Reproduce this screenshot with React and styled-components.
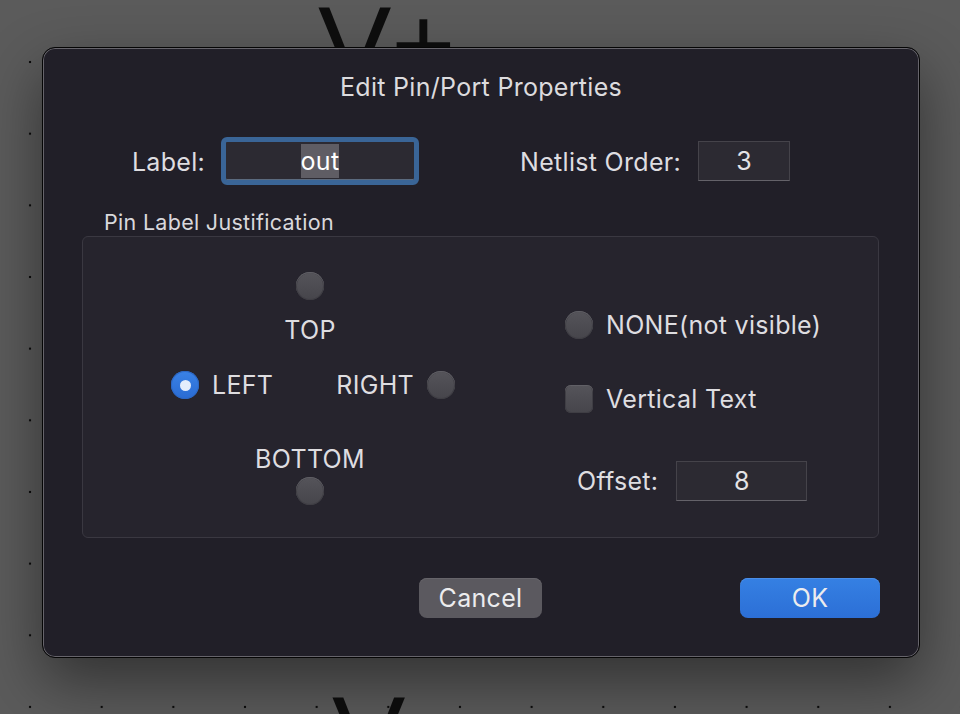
import React from "react";
import styled, { createGlobalStyle } from "styled-components";

const Global = createGlobalStyle`
  html, body { margin: 0; padding: 0; }
  body { font-family: Inter, "Noto Sans", sans-serif; letter-spacing: 0.3px; }
`;

const Page = styled.div`
  position: relative;
  width: 960px;
  height: 714px;
  overflow: hidden;
  background-color: #5b5b5b;
  background-image: radial-gradient(circle, #0a0a0a 1.1px, transparent 1.6px);
  background-size: 71.67px 71.67px;
  background-position: -5.8px 26.2px;
  padding: 47px 0 0 42px;
  box-sizing: border-box;
`;

const CanvasText = styled.div`
  position: absolute;
  left: ${(p) => p.$x}px;
  top: ${(p) => p.$y}px;
  font-family: "Liberation Sans", Arial, sans-serif;
  font-size: 110px;
  letter-spacing: 0;
  line-height: 1;
  color: #0e0e0e;
  white-space: pre;
`;

const Dialog = styled.div`
  position: relative;
  width: 878px;
  height: 611px;
  box-sizing: border-box;
  background: #211f28;
  border: 1px solid #050505;
  border-radius: 13px;
  box-shadow: inset 0 0 0 1px #66646b, 0 24px 60px rgba(0, 0, 0, 0.45);
  color: #dedde0;
  display: flex;
  flex-direction: column;
`;

const Title = styled.div`
  margin-top: 24px;
  height: 30px;
  line-height: 30px;
  text-align: center;
  font-size: 25px;
  color: #dcdbde;
`;

const TopRow = styled.div`
  margin-top: 35px;
  height: 48px;
  display: grid;
  grid-template-columns: 178px 198px 279px 92px;
  align-items: center;
`;

const FieldLabel = styled.div`
  font-size: 25px;
  line-height: 30px;
  padding-top: 2px;
  text-align: right;
  padding-right: ${(p) => p.$pr || 0}px;
  white-space: nowrap;
`;

const FocusRing = styled.div`
  height: 48px;
  box-sizing: border-box;
  border: 5px solid #3a6597;
  border-radius: 6px;
  background: #2c2a32;
  display: flex;
  align-items: center;
  justify-content: center;
  box-shadow: inset 0 -1px 0 #5b6a7e;
`;

const Selected = styled.span`
  background: #5f5d64;
  color: #ffffff;
  font-size: 25px;
  line-height: 34px;
`;

const TextField = styled.div`
  width: ${(p) => p.$w}px;
  height: 40px;
  box-sizing: border-box;
  background: #2c2a32;
  border: 1px solid #45434a;
  border-bottom-color: #646269;
  display: flex;
  align-items: center;
  justify-content: center;
  font-size: 25px;
  color: #e4e3e6;
  margin-left: ${(p) => p.$ml || 0}px;
`;

const GroupLabel = styled.div`
  margin: 25px 0 0 61px;
  height: 24px;
  line-height: 24px;
  font-size: 21.5px;
  color: #d9d8dc;
`;

const GroupBox = styled.div`
  margin: 2px 0 0 39px;
  width: 797px;
  height: 302px;
  box-sizing: border-box;
  background: #26242d;
  border: 1px solid #3a3841;
  border-radius: 6px;
  display: flex;
`;

const Compass = styled.div`
  margin-left: 88px;
  width: 284px;
  display: flex;
  flex-direction: column;
  align-items: center;
  padding-top: 35px;
`;

const Radio = styled.div`
  width: 28px;
  height: 28px;
  flex: none;
  border-radius: 50%;
  box-sizing: border-box;
  background: ${(p) =>
    p.$on
      ? "linear-gradient(#3a82e6, #2a6bd2)"
      : "linear-gradient(#55545a, #46454b)"};
  box-shadow: ${(p) =>
    p.$on
      ? "inset 0 0 0 1px #2b67c4"
      : "inset 0 1px 0 #616066, inset 0 0 0 1px #3f3e44"};
  display: flex;
  align-items: center;
  justify-content: center;
  margin: ${(p) => p.$m || "0"};
  &::after {
    content: "";
    display: ${(p) => (p.$on ? "block" : "none")};
    width: 11px;
    height: 11px;
    border-radius: 50%;
    background: #e3edfc;
  }
`;

const Check = styled.div`
  width: 28px;
  height: 28px;
  flex: none;
  border-radius: 6px;
  background: linear-gradient(#55545a, #46454b);
  box-shadow: inset 0 1px 0 #616066, inset 0 0 0 1px #3f3e44;
`;

const OptionText = styled.div`
  font-size: 25px;
  line-height: 28px;
  color: #dedde0;
  white-space: nowrap;
  margin: ${(p) => p.$m || "0"};
`;

const MidRow = styled.div`
  align-self: stretch;
  margin-top: 27px;
  height: 28px;
  display: flex;
  align-items: center;
  gap: 13px;
`;

const Spacer = styled.div`
  flex: 1;
`;

const RightCol = styled.div`
  margin-left: 110px;
  padding-top: 74px;
  display: flex;
  flex-direction: column;
`;

const OptRow = styled.div`
  display: flex;
  align-items: center;
  gap: 13px;
  height: 28px;
  margin-top: ${(p) => p.$mt || 0}px;
`;

const OffsetRow = styled.div`
  margin: 48px 0 0 12px;
  display: flex;
  align-items: center;
`;

const ButtonRow = styled.div`
  margin: 40px 0 0 376px;
  display: flex;
  gap: 198px;
`;

const Button = styled.div`
  width: ${(p) => p.$w}px;
  height: 40px;
  box-sizing: border-box;
  border-radius: 8px;
  display: flex;
  align-items: center;
  justify-content: center;
  font-size: 25px;
  color: #ececee;
  background: ${(p) =>
    p.$primary ? "linear-gradient(#3580e3, #2c6fd6)" : "#5b595f"};
  box-shadow: ${(p) =>
    p.$primary ? "inset 0 1px 0 #4b8ee8" : "inset 0 1px 0 #66646a"};
`;

export default function App() {
  return (
    <>
      <Global />
      <Page>
        <CanvasText $x={318} $y={-10}>V+</CanvasText>
        <CanvasText $x={332} $y={680}>V</CanvasText>
        <Dialog>
          <Title>Edit Pin/Port Properties</Title>
          <TopRow>
            <FieldLabel $pr={16}>Label:</FieldLabel>
            <FocusRing>
              <Selected>out</Selected>
            </FocusRing>
            <FieldLabel $pr={17}>Netlist Order:</FieldLabel>
            <TextField $w={92}>3</TextField>
          </TopRow>
          <GroupLabel>Pin Label Justification</GroupLabel>
          <GroupBox>
            <Compass>
              <Radio $m="0 6px 0 0" />
              <OptionText $m="16px 6px 0 0">TOP</OptionText>
              <MidRow>
                <Radio $on />
                <OptionText>LEFT</OptionText>
                <Spacer />
                <OptionText>RIGHT</OptionText>
                <Radio />
              </MidRow>
              <OptionText $m="46px 6px 0 0">BOTTOM</OptionText>
              <Radio $m="4px 6px 0 0" />
            </Compass>
            <RightCol>
              <OptRow>
                <Radio />
                <OptionText>NONE(not visible)</OptionText>
              </OptRow>
              <OptRow $mt={46}>
                <Check />
                <OptionText>Vertical Text</OptionText>
              </OptRow>
              <OffsetRow>
                <OptionText>Offset:</OptionText>
                <TextField $w={131} $ml={18}>8</TextField>
              </OffsetRow>
            </RightCol>
          </GroupBox>
          <ButtonRow>
            <Button $w={123}>Cancel</Button>
            <Button $w={140} $primary>OK</Button>
          </ButtonRow>
        </Dialog>
      </Page>
    </>
  );
}
